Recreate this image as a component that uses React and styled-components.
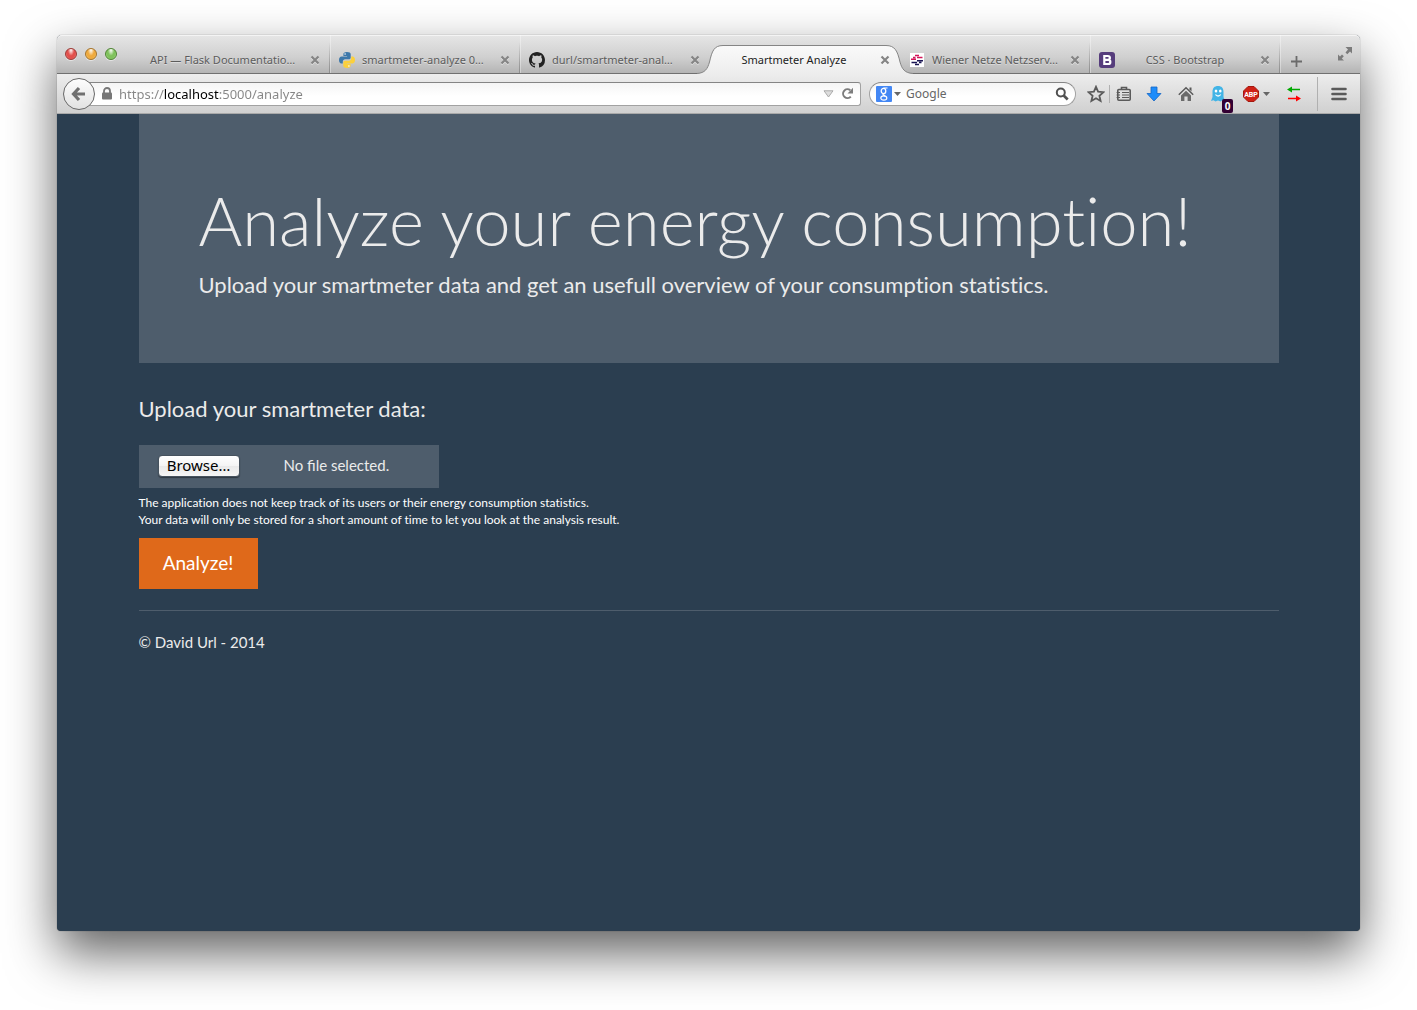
import React, { useRef } from "react";
import styled, { createGlobalStyle } from "styled-components";

const chromeFont = `"Lucida Grande", "Noto Sans", "Open Sans", sans-serif`;
const pageFont = `Lato, "Open Sans", sans-serif`;

const GlobalStyle = createGlobalStyle`
  *, *::before, *::after { box-sizing: border-box; }
  body { margin: 0; background: #fff; }
  button, input { font: inherit; color: inherit; }
  h1, h2, p { margin: 0; }
`;

const Desktop = styled.div`
  display: flex;
  min-height: 100vh;
  padding: 35px 57px 79px;
`;

const Window = styled.div`
  flex: 1;
  min-width: 0;
  display: flex;
  flex-direction: column;
  border-radius: 5px 5px 4px 4px;
  background: #2b3e50;
  box-shadow: 0 0 1px rgba(0, 0, 0, 0.6), 0 22px 50px rgba(0, 0, 0, 0.62);
`;

/* Title bar with tabs */
const TitleBar = styled.header`
  display: flex;
  height: 39px;
  padding-left: 8px;
  border-radius: 5px 5px 0 0;
  border-bottom: 1px solid #707070;
  background: linear-gradient(#e6e6e6, #cfcfcf 60%, #b4b4b4);
  box-shadow: inset 0 1px 0 #f4f4f4;
  font-family: ${chromeFont};
`;

const Lights = styled.div`
  display: flex;
  gap: 8px;
  width: 75px;
  padding-top: 13px;
`;

const Light = styled.button`
  width: 12px;
  height: 12px;
  padding: 0;
  border: 1px solid ${(p) => p.$edge};
  border-radius: 50%;
  background: radial-gradient(ellipse at 50% 10%, #fff 0, ${(p) => p.$fill} 45%, ${(p) => p.$fill} 65%, ${(p) => p.$glow} 100%);
  box-shadow: 0 1px 0 rgba(255, 255, 255, 0.5);
`;

const Tabs = styled.nav`
  display: flex;
`;

const TabBox = styled.div`
  position: relative;
  display: flex;
  align-items: center;
  width: 190px;
  height: 38px;
  padding: 12px ${(p) => (p.$line ? 9 : 10)}px 0 ${(p) => (p.$icon ? 9 : 10)}px;
  color: ${(p) => (p.$active ? "#222" : "#5c5c5c")};
  text-shadow: 0 1px 0 rgba(255, 255, 255, 0.4);
  font-size: 11px;
  line-height: 16px;
  ${(p) =>
    p.$line &&
    `border-right: 1px solid;
     border-image: linear-gradient(rgba(120,120,120,0) 20%, #8d8d8d) 1;
     box-shadow: 1px 0 0 rgba(255,255,255,.35);`}
`;

const TabShape = styled.svg`
  position: absolute;
  left: -13px;
  top: 9px;
`;

const TabLink = styled.a`
  position: relative;
  flex: 1;
  min-width: 0;
  display: flex;
  align-items: center;
  gap: 7px;
  padding-right: ${(p) => (p.$center ? 12 : 0)}px;
  color: inherit;
  text-decoration: none;
  white-space: nowrap;
`;

const TabText = styled.span`
  flex: 1;
  text-align: ${(p) => (p.$center ? "center" : "left")};
`;

const IconButton = styled.button`
  position: relative;
  flex: none;
  display: flex;
  align-items: center;
  justify-content: center;
  width: ${(p) => p.$w || 32}px;
  height: ${(p) => p.$h || 32}px;
  padding: 0;
  border: 0;
  background: none;
  color: #555;
`;

const NewTab = styled(IconButton)`
  margin-top: 10px;
`;

const FullScreen = styled(IconButton)`
  margin: 11px 7px 0 auto;
`;

/* Navigation bar */
const NavBar = styled.div`
  display: flex;
  align-items: center;
  height: 40px;
  padding-left: 6px;
  border-bottom: 1px solid #a9a9a9;
  background: linear-gradient(#ededed, #d0d0d0);
  color: #5c5c5c;
  font-family: ${chromeFont};
  font-size: 12px;
`;

const Back = styled.button`
  position: relative;
  z-index: 1;
  flex: none;
  display: flex;
  align-items: center;
  justify-content: center;
  width: 32px;
  height: 32px;
  padding: 0;
  border: 1px solid #686868;
  border-radius: 50%;
  background: linear-gradient(#fdfdfd, #e2e2e2);
`;

const Field = styled.div`
  display: flex;
  align-items: center;
  height: 24px;
  border: 1px solid #a2a2a2;
  border-top-color: #858585;
  background: linear-gradient(#f5f5f5, #fff 60%);
`;

const AddressField = styled(Field)`
  flex: 1;
  min-width: 0;
  margin-left: -16px;
  padding: 0 6px 0 22px;
  gap: 6px;
  border-left: 0;
  border-radius: 0 3px 3px 0;
`;

const SearchField = styled(Field)`
  flex: none;
  width: 207px;
  margin: 0 7px 0 8px;
  padding: 0 6px;
  gap: 2px;
  border-radius: 12px;
`;

const TextInput = styled.input`
  flex: 1;
  min-width: 0;
  padding: 0;
  border: 0;
  outline: 0;
  background: none;
  line-height: 18px;
  &::placeholder { color: #666; opacity: 1; }
`;

const SearchInput = styled(TextInput)`
  padding-left: 3px;
`;

/* The host name stands out in black; protocol and path stay grey. */
const AddressInput = styled(TextInput)`
  background: linear-gradient(90deg, #858585 45px, #000 45px, #000 100px, #858585 100px);
  -webkit-background-clip: text;
  background-clip: text;
  color: transparent;
  font-size: 13px;
`;

const Divider = styled.span`
  flex: none;
  width: 1px;
  height: ${(p) => p.$h}px;
  background: #b0b0b0;
`;

const Badge = styled.span`
  position: absolute;
  left: 20px;
  top: 21px;
  width: 11px;
  height: 14px;
  border-radius: 2px;
  background: #330033;
  color: #fff;
  font-size: 10px;
  font-weight: 700;
  line-height: 14px;
  text-align: center;
`;

const BlockerGroup = styled.div`
  flex: none;
  display: flex;
  margin-left: 7px;
`;

/* Page */
const Page = styled.main`
  flex: 1;
  color: #ebebeb;
  font-family: ${pageFont};
  font-size: 15px;
  line-height: 21px;
`;

const Container = styled.div`
  max-width: 1140px;
  margin: 0 auto;
`;

const Jumbotron = styled.section`
  display: flex;
  flex-direction: column;
  gap: 10px;
  padding: 69px 60px 62px;
  background: #4e5d6c;
  font-variant-ligatures: none;
`;

const Title = styled.h1`
  font-size: 67px;
  font-weight: 300;
  line-height: 75px;
`;

const Lead = styled.p`
  font-size: 22px;
  line-height: 33px;
`;

const Form = styled.form`
  display: flex;
  flex-direction: column;
  align-items: flex-start;
  padding: 31px 0 21px;
  border-bottom: 1px solid #4e5d6c;
`;

const FormLabel = styled.label`
  margin-bottom: 21px;
  font-size: 22px;
  line-height: 30px;
`;

const FileBox = styled.div`
  display: flex;
  align-items: center;
  gap: 44px;
  width: 300px;
  height: 43px;
  padding: 0 19px 2px;
  background: #4e5d6c;
`;

const HiddenFile = styled.input`
  position: absolute;
  width: 1px;
  height: 1px;
  opacity: 0;
`;

const Browse = styled.button`
  width: 82px;
  height: 22px;
  padding: 0 0 2px;
  border: 1px solid #46525e;
  border-radius: 4px;
  background: linear-gradient(#fff, #f4f4f4 50%, #e9e9e9 50%, #f6f6f6);
  box-shadow: 0 1px 1px rgba(0, 0, 0, 0.4);
  color: #000;
  font-family: ${chromeFont};
  font-size: 15px;
  line-height: 18px;
`;

const Help = styled.p`
  padding: 6px 0 10px;
  color: #fff;
  font-size: 12px;
  font-variant-ligatures: none;
  line-height: 17px;
`;

const Submit = styled.button`
  height: 51px;
  min-width: 119px;
  padding: 0 24px 2px;
  border: 0;
  background: #df691a;
  color: #fff;
  font-size: 19px;
`;

const Footer = styled.footer`
  padding: 21px 0;
`;

/* Icons */
const CloseIcon = () => (
  <svg width="10" height="10" viewBox="0 0 10 10" fill="none">
    <path d="M1.500 2.500l7 7M8.500 2.500l-7 7" stroke="#fff" strokeOpacity=".5" strokeWidth="2" />
    <path d="M1.500 1.500l7 7M8.500 1.500l-7 7" stroke="#858585" strokeWidth="2.200" />
  </svg>
);

const PythonIcon = () => (
  <svg width="16" height="16" viewBox="0 0 16 16">
    <path fill="#3d78aa" d="M7.900 0C5.200 0 4.400 1 4.400 2.200V4h3.700v.6H2.700C1 4.600 0 6 0 8.100s1 3.400 2.300 3.400h1.500V9.600c0-1.300 1-2.300 2.300-2.300h3.700c1.100 0 1.900-.8 1.900-1.900V2.200C11.700.9 10.500 0 7.900 0z" />
    <path fill="#fbd03c" d="M8.100 16c2.700 0 3.500-1 3.500-2.200V12H7.900v-.6h5.400c1.700 0 2.700-1.400 2.700-3.500s-1-3.400-2.300-3.400h-1.500v1.900c0 1.300-1 2.300-2.300 2.300H6.200c-1.100 0-1.900.8-1.900 1.900v3.200C4.300 15.100 5.500 16 8.100 16z" />
    <circle cx="6.100" cy="2" r=".8" fill="#fff" />
    <circle cx="9.900" cy="14" r=".8" fill="#fff" />
  </svg>
);

const GithubIcon = () => (
  <svg width="16" height="16" viewBox="0 0 16 16" fill="#222">
    <path d="M8 0C3.580 0 0 3.580 0 8c0 3.540 2.290 6.530 5.470 7.590.4.070.55-.17.55-.38 0-.19-.01-.82-.01-1.490-2.010.37-2.530-.49-2.690-.94-.09-.23-.48-.94-.82-1.130-.28-.15-.68-.52-.01-.53.630-.01 1.080.58 1.230.82.720 1.210 1.870.87 2.330.66.070-.52.280-.87.510-1.070-1.780-.2-3.640-.89-3.640-3.950 0-.87.310-1.590.82-2.150-.08-.2-.36-1.020.08-2.120 0 0 .67-.21 2.200.82.640-.18 1.320-.27 2-.27s1.360.09 2 .27c1.530-1.040 2.200-.82 2.200-.82.440 1.100.160 1.920.080 2.120.510.560.820 1.270.820 2.150 0 3.070-1.870 3.750-3.650 3.950.290.250.540.730.540 1.480 0 1.070-.01 1.930-.01 2.200 0 .21.150.46.550.38A8.010 8.010 0 0 0 16 8c0-4.420-3.580-8-8-8z" />
  </svg>
);

const WienerIcon = () => (
  <svg width="16" height="16" viewBox="0 0 16 16">
    <path fill="#fff" d="M1 1h14v14H1z" />
    <path d="M6 3.500h4M4 5.400h2.500M8 5.400h5.500M2 7.200h5" stroke="#d4145a" strokeWidth="1.500" />
    <path d="M8 8.800h6M2.500 10.600h5.500M10 10.600h2.500M6 12.500h4" stroke="#1b1654" strokeWidth="1.500" />
  </svg>
);

const BootstrapIcon = () => (
  <svg width="16" height="16" viewBox="0 0 16 16">
    <rect width="16" height="16" rx="3" fill="#563d7c" />
    <path fill="none" stroke="#fff" strokeWidth="2.200" d="M5.300 4h3.500c2.800 0 2.800 3.800 0 3.800H5.300h3.800c3 0 3 4.200 0 4.200H5.300V4z" />
  </svg>
);

const BackIcon = () => (
  <svg width="18" height="16" viewBox="0 0 18 16" fill="none" stroke="#707070" strokeWidth="3.200">
    <path d="M9 2L3.500 8 9 14M4 8h11" />
  </svg>
);

const LockIcon = () => (
  <svg width="12" height="13" viewBox="0 0 12 13">
    <path d="M3 6V4a3 3 0 0 1 6 0v2" fill="none" stroke="#777" strokeWidth="1.800" />
    <rect x="1" y="5.500" width="10" height="7" rx="1" fill="#777" />
  </svg>
);

const DropIcon = () => (
  <svg width="11" height="8" viewBox="0 0 11 8">
    <path d="M1 .8h9L5.500 7z" fill="#ddd" stroke="#aaa" />
  </svg>
);

const ReloadIcon = () => (
  <svg width="13" height="13" viewBox="0 0 13 13">
    <path d="M9.800 9.600A4.400 4.400 0 1 1 9.300 3.300" fill="none" stroke="#7c7c7c" strokeWidth="2" />
    <path d="M12 .8v5.700H6.500z" fill="#7c7c7c" />
  </svg>
);

const CaretIcon = () => (
  <svg width="7" height="4" viewBox="0 0 7 4">
    <path d="M0 0h7L3.500 4z" fill="#666" />
  </svg>
);

const GoogleIcon = () => (
  <svg width="16" height="16" viewBox="0 0 16 16">
    <rect width="16" height="16" rx="1" fill="#4387f4" />
    <g fill="none" stroke="#fff">
      <ellipse cx="7.500" cy="5" rx="2.300" ry="2.700" strokeWidth="1.300" />
      <path d="M11.500 2H7.500M7.500 7.700c-1.500 1 .5 1.800 1.600 2.300" strokeWidth="1.200" />
      <ellipse cx="7.800" cy="12" rx="3" ry="2.100" strokeWidth="1.200" />
    </g>
  </svg>
);

const SearchIcon = () => (
  <svg width="14" height="14" viewBox="0 0 14 14" fill="none" stroke="#505050">
    <circle cx="5.800" cy="5.500" r="4" strokeWidth="2" />
    <path d="M8.700 8.500l4 4" strokeWidth="2.600" />
  </svg>
);

const StarIcon = () => (
  <svg width="18" height="18" viewBox="0 0 18 18">
    <path d="M9 1.800l2.100 4.900 5.300.5-4 3.500 1.200 5.300L9 13.200 4.400 16l1.200-5.300-4-3.500 5.300-.5z" fill="none" stroke="#5a5a5a" strokeWidth="1.800" />
  </svg>
);

const ListIcon = () => (
  <svg width="16" height="16" viewBox="0 0 16 16">
    <path d="M5.500 3.500V1.500h5v2" fill="none" stroke="#5a5a5a" strokeWidth="1.600" />
    <rect x="1.800" y="3.500" width="12.400" height="10.800" rx="1" fill="none" stroke="#5a5a5a" strokeWidth="1.600" />
    <path d="M.6 6.500H4M6 6.500h7M.6 9H4M6 9h7M.6 11.500H4M6 11.500h7" stroke="#5a5a5a" strokeWidth="1.200" />
  </svg>
);

const DownloadIcon = () => (
  <svg width="16" height="16" viewBox="0 0 16 16">
    <path d="M5 1h6v6.500h4L8 15 1 7.500h4z" fill="#1d8cfa" stroke="#1566c4" strokeWidth=".8" />
  </svg>
);

const HomeIcon = () => (
  <svg width="16" height="16" viewBox="0 0 16 16">
    <path d="M.8 8.700L8 1.800l7.200 6.900" fill="none" stroke="#5a5a5a" strokeWidth="1.500" />
    <path d="M11.500 1.500h2v4l-2-2z" fill="#5a5a5a" />
    <path d="M3 9.500l5-4.700 5 4.700V15H9.600v-4.500H6.400V15H3z" fill="#6a6a6a" />
  </svg>
);

const GhostIcon = () => (
  <svg width="16" height="18" viewBox="0 0 16 18">
    <path d="M2.500 7C2.500 3 4.500 1 8 1s5.500 2 5.500 6v5l1.500 4-2.500-.8-2 1.300L8 15.500l-2.500 1-2-1.200L1 16l1.500-4z" fill="#42b4e6" />
    <ellipse cx="6" cy="6" rx="1.300" ry="1.600" fill="#fff" />
    <ellipse cx="10.300" cy="6" rx="1.300" ry="1.600" fill="#fff" />
    <path d="M5.500 9.500c1.200 2 4 2 5.200 0" fill="none" stroke="#fff" strokeWidth="1.300" />
  </svg>
);

const AbpIcon = () => (
  <svg width="16" height="16" viewBox="0 0 16 16">
    <path d="M5 .5h6L15.500 5v6L11 15.500H5L.5 11V5z" fill="#cf2116" stroke="#a3180f" />
    <text x="8" y="10.500" textAnchor="middle" fontFamily="Roboto, sans-serif" fontWeight="700" fontSize="7" fill="#fff">ABP</text>
  </svg>
);

const ArrowsIcon = () => (
  <svg width="14" height="16" viewBox="0 0 14 16">
    <path d="M0 3.500L5 .5v2.200h8v1.600H5v2.200z" fill="#00a800" />
    <path d="M14 12.500l-5-3v2.200H1v1.600h8v2.200z" fill="#f00" />
  </svg>
);

const MenuIcon = () => (
  <svg width="16" height="14" viewBox="0 0 16 14" stroke="#5a5a5a" strokeWidth="2.600" strokeLinecap="round">
    <path d="M1.500 2h13M1.500 7h13M1.500 12h13" />
  </svg>
);

const PlusIcon = () => (
  <svg width="11" height="11" viewBox="0 0 11 11" stroke="#6b6b6b" strokeWidth="1.800">
    <path d="M5.500 0v11M0 5.500h11" />
  </svg>
);

const ExpandIcon = () => (
  <svg width="16" height="16" viewBox="0 0 16 16" fill="#7b7b7b">
    <path d="M8.500 1H15v6.500l-2-2-2.700 2.700-1.800-1.800L11 3.500zM1 8.500l2 2 2-2L6.800 10.300l-2 2.200L7 14.500H1z" />
  </svg>
);

const tabs = [
  { title: "API — Flask Documentatio…", line: true },
  { title: "smartmeter-analyze 0…", icon: <PythonIcon />, line: true },
  { title: "durl/smartmeter-anal…", icon: <GithubIcon /> },
  { title: "Smartmeter Analyze", active: true, center: true },
  { title: "Wiener Netze Netzserv…", icon: <WienerIcon />, line: true },
  { title: "CSS · Bootstrap", icon: <BootstrapIcon />, center: true, line: true },
];

const Tab = ({ title, icon, active, center, line }) => (
  <TabBox $icon={!!icon} $active={active} $line={line}>
    {active && (
      <TabShape width="216" height="30" viewBox="0 0 216 30">
        <defs>
          <linearGradient id="tabFill" x2="0" y2="1">
            <stop stopColor="#fafafa" />
            <stop offset="1" stopColor="#ededed" />
          </linearGradient>
        </defs>
        <path
          d="M0 30V29.500C8 29 10.500 25 12.500 18C15 7 17 1.500 26 1.500H189C198 1.500 200.500 7 203 18C205 25 207.500 29 216 29.500V30z"
          fill="url(#tabFill)"
        />
        <path
          d="M0 29.500C8 29 10.500 25 12.500 18C15 7 17 1.500 26 1.500H189C198 1.500 200.500 7 203 18C205 25 207.500 29 216 29.500"
          fill="none"
          stroke="#858585"
        />
      </TabShape>
    )}
    <TabLink href="#" $center={center}>
      {icon}
      <TabText $center={center}>{title}</TabText>
    </TabLink>
    <IconButton $w={10} $h={16} aria-label="Close tab">
      <CloseIcon />
    </IconButton>
  </TabBox>
);

const UploadForm = () => {
  const file = useRef(null);
  return (
    <Form onSubmit={(e) => e.preventDefault()}>
      <FormLabel htmlFor="data">Upload your smartmeter data:</FormLabel>
      <FileBox>
        <HiddenFile id="data" type="file" ref={file} tabIndex={-1} />
        <Browse type="button" onClick={() => file.current.click()}>Browse…</Browse>
        <span>No file selected.</span>
      </FileBox>
      <Help>
        The application does not keep track of its users or their energy consumption statistics.
        <br />
        Your data will only be stored for a short amount of time to let you look at the analysis result.
      </Help>
      <Submit type="submit">Analyze!</Submit>
    </Form>
  );
};

export default function App() {
  return (
    <Desktop>
      <GlobalStyle />
      <Window>
        <TitleBar>
          <Lights>
            <Light aria-label="Close" $edge="#9c3a36" $fill="#e2504c" $glow="#ff9d98" />
            <Light aria-label="Minimize" $edge="#a5732b" $fill="#efaa3e" $glow="#ffe08c" />
            <Light aria-label="Zoom" $edge="#4f8435" $fill="#7fc25c" $glow="#c8f3a4" />
          </Lights>
          <Tabs>
            {tabs.map((tab) => (
              <Tab key={tab.title} {...tab} />
            ))}
          </Tabs>
          <NewTab aria-label="New tab"><PlusIcon /></NewTab>
          <FullScreen $w={16} $h={16} aria-label="Full screen"><ExpandIcon /></FullScreen>
        </TitleBar>
        <NavBar>
          <Back aria-label="Back"><BackIcon /></Back>
          <AddressField>
            <LockIcon />
            <AddressInput aria-label="Address" defaultValue="https://localhost:5000/analyze" />
            <DropIcon />
            <IconButton $w={14} $h={16} aria-label="Reload"><ReloadIcon /></IconButton>
          </AddressField>
          <SearchField>
            <GoogleIcon />
            <CaretIcon />
            <SearchInput aria-label="Search" placeholder="Google" />
            <IconButton $w={14} $h={16} aria-label="Search"><SearchIcon /></IconButton>
          </SearchField>
          <IconButton $w={26} aria-label="Bookmark"><StarIcon /></IconButton>
          <Divider $h={18} />
          <IconButton $w={28} aria-label="Bookmarks list"><ListIcon /></IconButton>
          <IconButton aria-label="Downloads"><DownloadIcon /></IconButton>
          <IconButton aria-label="Home"><HomeIcon /></IconButton>
          <IconButton aria-label="Trackers">
            <GhostIcon />
            <Badge>0</Badge>
          </IconButton>
          <BlockerGroup>
            <IconButton $w={20} aria-label="Ad blocker"><AbpIcon /></IconButton>
            <IconButton $w={10} aria-label="Ad blocker options"><CaretIcon /></IconButton>
          </BlockerGroup>
          <IconButton $w={46} aria-label="Proxy"><ArrowsIcon /></IconButton>
          <Divider $h={34} />
          <IconButton $w={42} aria-label="Menu"><MenuIcon /></IconButton>
        </NavBar>
        <Page>
          <Container>
            <Jumbotron>
              <Title>Analyze your energy consumption!</Title>
              <Lead>Upload your smartmeter data and get an usefull overview of your consumption statistics.</Lead>
            </Jumbotron>
            <UploadForm />
            <Footer>© David Url - 2014</Footer>
          </Container>
        </Page>
      </Window>
    </Desktop>
  );
}
